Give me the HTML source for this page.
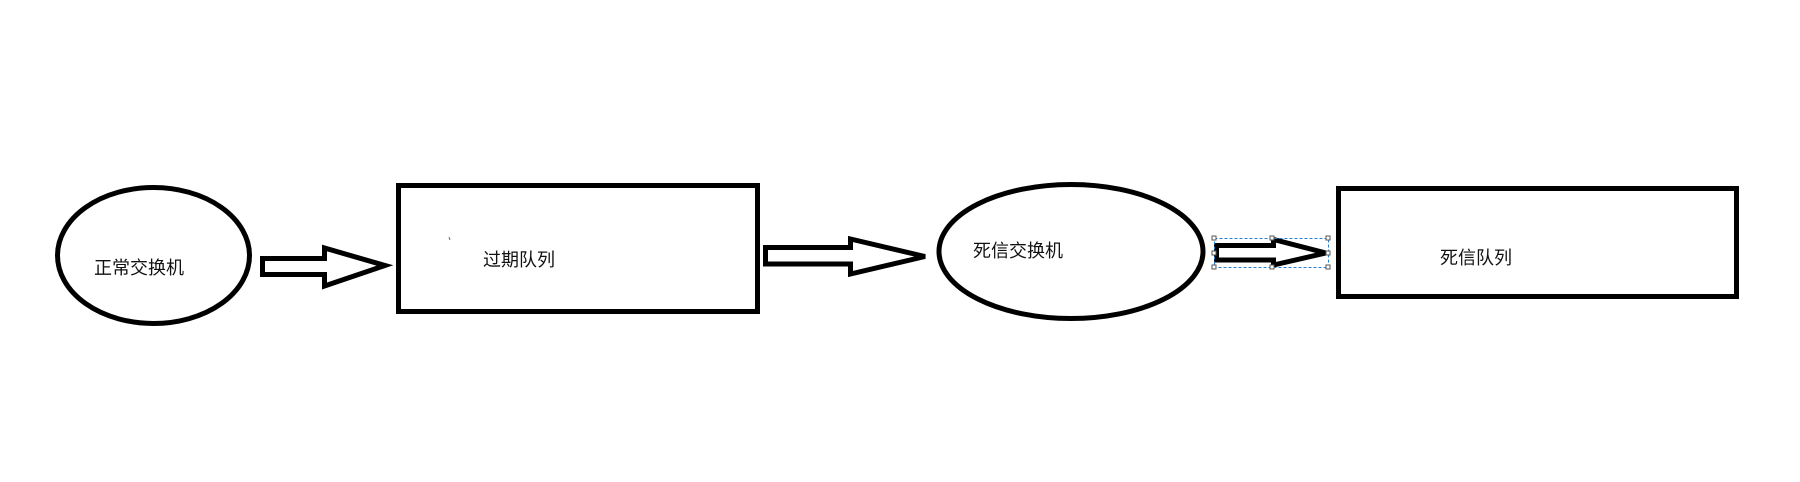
<!DOCTYPE html>
<html><head><meta charset="utf-8"><style>
html,body{margin:0;padding:0;background:#fff;width:1800px;height:482px;overflow:hidden}
svg{display:block}
text{font-family:"Liberation Sans","Noto Sans CJK SC","WenQuanYi Zen Hei",sans-serif;font-size:18px;fill:#111}
</style></head><body>
<svg width="1800" height="482" viewBox="0 0 1800 482" xmlns="http://www.w3.org/2000/svg">
<g fill="none" stroke="#000" stroke-width="5" stroke-linejoin="miter">
<ellipse cx="153.5" cy="255.5" rx="96" ry="68"/>
<rect x="398.5" y="185.5" width="359" height="126"/>
<ellipse cx="1071" cy="251.5" rx="132" ry="67"/>
<rect x="1338.5" y="188.5" width="398" height="108"/>
<polygon points="262.5,258.5 324.5,258.5 324.5,248 385,265.5 324.5,286 324.5,274.5 262.5,274.5"/>
<polygon points="765.5,247.5 850.5,247.5 850.5,239 925,256.5 850.5,274 850.5,264 765.5,264"/>
<polygon points="1216.5,245.5 1273.5,245.5 1273.5,239.5 1326,253 1273.5,265 1273.5,260 1216.5,260"/>
</g>
<rect x="1214.5" y="238.5" width="114" height="29" fill="none" stroke="#2a7fd0" stroke-width="1" stroke-dasharray="3,2"/>
<g fill="#fff" stroke="#555" stroke-width="1">
<rect x="1212" y="236" width="4" height="4"/><rect x="1270" y="236" width="4" height="4"/><rect x="1326" y="236" width="4" height="4"/>
<rect x="1212" y="251" width="4" height="4"/><rect x="1326" y="251" width="4" height="4"/>
<rect x="1212" y="265" width="4" height="4"/><rect x="1270" y="265" width="4" height="4"/><rect x="1326" y="265" width="4" height="4"/>
</g>
<line x1="449" y1="237" x2="450" y2="240" stroke="#666" stroke-width="1"/>
<text x="94" y="274">正常交换机</text>
<text x="483" y="266">过期队列</text>
<text x="973" y="257">死信交换机</text>
<text x="1440" y="264">死信队列</text>
</svg>
</body></html>
